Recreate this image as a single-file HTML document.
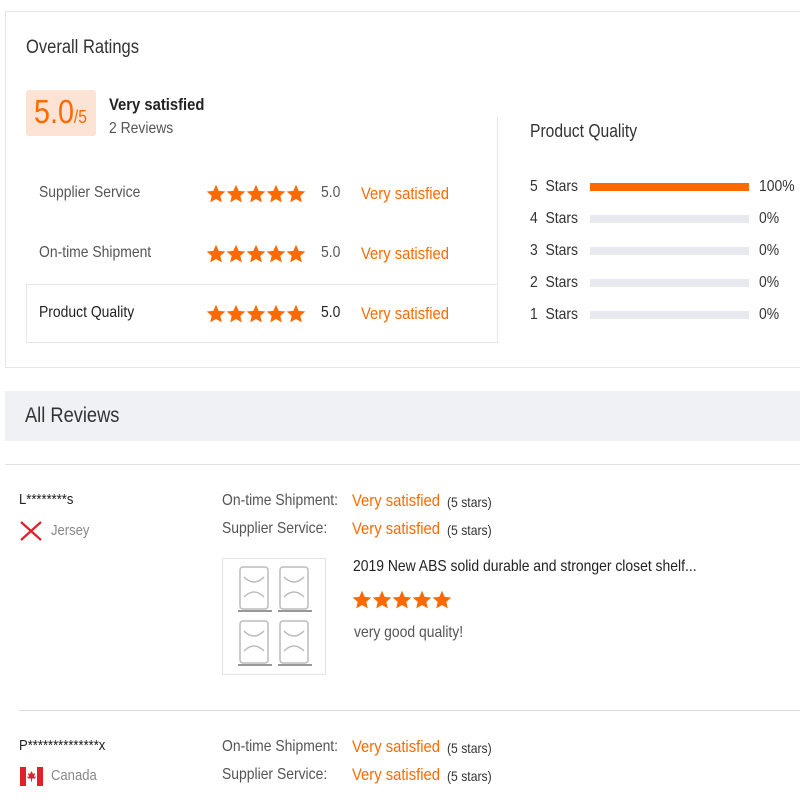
<!DOCTYPE html>
<html><head><style>
*{margin:0;padding:0;box-sizing:border-box}
body{width:800px;height:800px;background:#fff;font-family:"Liberation Sans",sans-serif;color:#333;position:relative;overflow:hidden}
.a{position:absolute;white-space:nowrap}
.t{transform:scaleX(.87);transform-origin:0 0}
.o{color:#ff6a00}
.g{color:#555}
.bar{position:absolute;left:590px;width:159px;height:8px;background:#e8e9ee}
</style></head><body>
<svg width="0" height="0" style="position:absolute"><defs><symbol id="s" viewBox="0 0 20 20"><path d="M10 .8l2.7 6.1 6.6.6-5 4.4 1.5 6.5L10 15l-5.8 3.4 1.5-6.5-5-4.4 6.6-.6z" fill="#ff6a00"/></symbol></defs></svg>
<div class="a" style="left:5px;top:11px;width:800px;height:357px;border:1px solid #e6e6e6"></div>
<div class="a t" style="left:26px;top:37px;font-size:19px;color:#333">Overall Ratings</div>
<div class="a" style="left:26px;top:90px;width:70px;height:46px;background:#fde3d3;border-radius:3px"></div>
<div class="a o t" style="left:34px;top:93px;font-size:33px">5.0<span style="font-size:18px">/5</span></div>
<div class="a t" style="left:109px;top:95px;font-size:17px;font-weight:bold;color:#222">Very satisfied</div>
<div class="a g t" style="left:109px;top:120px;font-size:16px">2 Reviews</div>
<div class="a" style="left:497px;top:117px;width:1px;height:226px;background:#e6e6e6"></div>
<div class="a" style="left:26px;top:284px;width:472px;height:59px;border:1px solid #e6e6e6;border-right:none"></div>

<div class="a g t" style="left:39px;top:184px;font-size:16px">Supplier Service</div>
<svg class="a" style="left:206px;top:184px" width="102" height="20"><use href="#s" x="0" width="20" height="20"/><use href="#s" x="20" width="20" height="20"/><use href="#s" x="40" width="20" height="20"/><use href="#s" x="60" width="20" height="20"/><use href="#s" x="80" width="20" height="20"/></svg>
<div class="a g t" style="left:321px;top:184px;font-size:16px">5.0</div>
<div class="a o t" style="left:361px;top:184px;font-size:17px">Very satisfied</div>

<div class="a g t" style="left:39px;top:244px;font-size:16px">On-time Shipment</div>
<svg class="a" style="left:206px;top:244px" width="102" height="20"><use href="#s" x="0" width="20" height="20"/><use href="#s" x="20" width="20" height="20"/><use href="#s" x="40" width="20" height="20"/><use href="#s" x="60" width="20" height="20"/><use href="#s" x="80" width="20" height="20"/></svg>
<div class="a g t" style="left:321px;top:244px;font-size:16px">5.0</div>
<div class="a o t" style="left:361px;top:244px;font-size:17px">Very satisfied</div>

<div class="a t" style="left:39px;top:304px;font-size:16px;color:#222">Product Quality</div>
<svg class="a" style="left:206px;top:304px" width="102" height="20"><use href="#s" x="0" width="20" height="20"/><use href="#s" x="20" width="20" height="20"/><use href="#s" x="40" width="20" height="20"/><use href="#s" x="60" width="20" height="20"/><use href="#s" x="80" width="20" height="20"/></svg>
<div class="a t" style="left:321px;top:304px;font-size:16px;color:#222">5.0</div>
<div class="a o t" style="left:361px;top:304px;font-size:17px">Very satisfied</div>

<div class="a t" style="left:530px;top:121px;font-size:18px;color:#333">Product Quality</div>
<div class="a t" style="left:530px;top:178px;font-size:16px">5&nbsp; Stars</div><div class="bar" style="top:183px;background:#ff6a00"></div><div class="a t" style="left:759px;top:178px;font-size:16px">100%</div>
<div class="a t" style="left:530px;top:210px;font-size:16px">4&nbsp; Stars</div><div class="bar" style="top:215px"></div><div class="a t" style="left:759px;top:210px;font-size:16px">0%</div>
<div class="a t" style="left:530px;top:242px;font-size:16px">3&nbsp; Stars</div><div class="bar" style="top:247px"></div><div class="a t" style="left:759px;top:242px;font-size:16px">0%</div>
<div class="a t" style="left:530px;top:274px;font-size:16px">2&nbsp; Stars</div><div class="bar" style="top:279px"></div><div class="a t" style="left:759px;top:274px;font-size:16px">0%</div>
<div class="a t" style="left:530px;top:306px;font-size:16px">1&nbsp; Stars</div><div class="bar" style="top:311px"></div><div class="a t" style="left:759px;top:306px;font-size:16px">0%</div>

<div class="a" style="left:5px;top:391px;width:800px;height:50px;background:#f0f1f4"></div>
<div class="a t" style="left:25px;top:404px;font-size:21px;color:#333">All Reviews</div>
<div class="a" style="left:5px;top:464px;width:800px;height:1px;background:#e0e0e0"></div>

<div class="a t" style="left:19px;top:491px;font-size:15px;color:#222">L********s</div>
<svg class="a" style="left:19px;top:521px" width="24" height="20"><path d="M2 1L22 19M22 1L2 19" stroke="#e0202a" stroke-width="2.2"/></svg>
<div class="a t" style="left:51px;top:522px;font-size:15px;color:#888">Jersey</div>
<div class="a g t" style="left:222px;top:492px;font-size:16px">On-time Shipment:</div>
<div class="a o t" style="left:352px;top:491px;font-size:17px">Very satisfied</div>
<div class="a t" style="left:447px;top:494px;font-size:14px">(5 stars)</div>
<div class="a g t" style="left:222px;top:520px;font-size:16px">Supplier Service:</div>
<div class="a o t" style="left:352px;top:519px;font-size:17px">Very satisfied</div>
<div class="a t" style="left:447px;top:522px;font-size:14px">(5 stars)</div>
<div class="a" style="left:222px;top:558px;width:104px;height:117px;border:1px solid #e3e3e3"></div>
<svg class="a" style="left:236px;top:565px" width="80" height="105" fill="none" stroke="#bbb" stroke-width="1.5">
<rect x="4" y="2" width="28" height="42" rx="3"/><rect x="44" y="2" width="28" height="42" rx="3"/>
<rect x="4" y="56" width="28" height="42" rx="3"/><rect x="44" y="56" width="28" height="42" rx="3"/>
<path d="M8 12q10 10 20 0M8 32q10-10 20 0M48 12q10 10 20 0M48 32q10-10 20 0M8 66q10 10 20 0M8 86q10-10 20 0M48 66q10 10 20 0M48 86q10-10 20 0"/>
<path d="M2 46h34M42 46h34M2 100h34M42 100h34" stroke="#999" stroke-width="2"/>
</svg>
<div class="a t" style="left:353px;top:558px;font-size:16px;color:#222">2019 New ABS solid durable and stronger closet shelf...</div>
<svg class="a" style="left:352px;top:590px" width="102" height="20"><use href="#s" x="0" width="20" height="20"/><use href="#s" x="20" width="20" height="20"/><use href="#s" x="40" width="20" height="20"/><use href="#s" x="60" width="20" height="20"/><use href="#s" x="80" width="20" height="20"/></svg>
<div class="a g t" style="left:354px;top:624px;font-size:16px">very good quality!</div>

<div class="a" style="left:19px;top:710px;width:790px;height:1px;background:#ddd"></div>

<div class="a t" style="left:19px;top:737px;font-size:15px;color:#222">P**************x</div>
<svg class="a" style="left:20px;top:767px" width="23" height="19"><rect width="23" height="19" fill="#fff"/><rect width="6" height="19" fill="#e0202a"/><rect x="17" width="6" height="19" fill="#e0202a"/><path d="M11.5 4l1.5 3 2-1-1 4 2-.5-1 2H12v3h-1v-3H8l-1-2 2 .5-1-4 2 1z" fill="#e0202a"/></svg>
<div class="a t" style="left:51px;top:767px;font-size:15px;color:#888">Canada</div>
<div class="a g t" style="left:222px;top:738px;font-size:16px">On-time Shipment:</div>
<div class="a o t" style="left:352px;top:737px;font-size:17px">Very satisfied</div>
<div class="a t" style="left:447px;top:740px;font-size:14px">(5 stars)</div>
<div class="a g t" style="left:222px;top:766px;font-size:16px">Supplier Service:</div>
<div class="a o t" style="left:352px;top:765px;font-size:17px">Very satisfied</div>
<div class="a t" style="left:447px;top:768px;font-size:14px">(5 stars)</div>
</body></html>
